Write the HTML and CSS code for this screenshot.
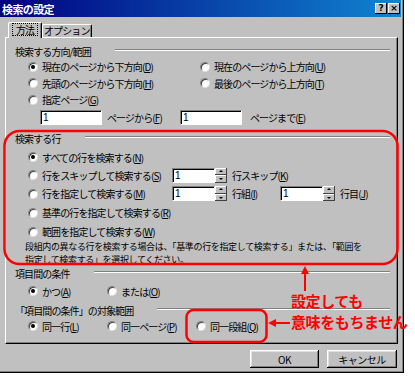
FILE: index.html
```html
<!DOCTYPE html>
<html lang="ja">
<head>
    <meta charset="UTF-8">
    <title>検索の設定</title>
    <link rel="stylesheet" href="styles.css">
</head>
<body>
<div class="dialog">
    <div class="titlebar">
        <span class="title">検索の設定</span>
        <div class="title-buttons">
            <span class="tbtn">?</span><span class="tbtn">×</span>
        </div>
    </div>

    <div class="tabs">
        <div class="tab active"><span class="focus">方法</span></div>
        <div class="tab">オプション</div>
    </div>

    <div class="panel">
        <div class="group-head"><span>検索する方向/範囲</span><i class="etch"></i></div>
        <div class="row h17">
            <label class="opt w172"><span class="radio on"></span>現在のページから下方向(<u>D</u>)</label>
            <label class="opt"><span class="radio"></span>現在のページから上方向(<u>U</u>)</label>
        </div>
        <div class="row h16">
            <label class="opt w172"><span class="radio"></span>先頭のページから下方向(<u>H</u>)</label>
            <label class="opt"><span class="radio"></span>最後のページから上方向(<u>T</u>)</label>
        </div>
        <div class="row h17">
            <label class="opt"><span class="radio"></span>指定ページ(<u>G</u>)</label>
        </div>
        <div class="row h19 pages">
            <span class="field wide">1</span>
            <span class="after-field w78">ページから(<u>F</u>)</span>
            <span class="field wide">1</span>
            <span class="after-field gap8">ページまで(<u>E</u>)</span>
        </div>

        <div class="group-head mt4"><span>検索する行</span><i class="etch"></i></div>
        <div class="row h18 mt3">
            <label class="opt"><span class="radio on"></span>すべての行を検索する(<u>N</u>)</label>
        </div>
        <div class="row h18">
            <label class="opt w144"><span class="radio"></span>行をスキップして検索する(<u>S</u>)</label>
            <span class="spinbox"><span class="field narrow">1</span><span class="spin"><i></i><i class="down"></i></span></span>
            <span class="after-field">行スキップ(<u>K</u>)</span>
        </div>
        <div class="row h19">
            <label class="opt w144"><span class="radio"></span>行を指定して検索する(<u>M</u>)</label>
            <span class="spinbox"><span class="field narrow">1</span><span class="spin"><i></i><i class="down"></i></span></span>
            <span class="after-field w53">行組(<u>I</u>)</span>
            <span class="spinbox"><span class="field narrow">1</span><span class="spin"><i></i><i class="down"></i></span></span>
            <span class="after-field">行目(<u>J</u>)</span>
        </div>
        <div class="row h19">
            <label class="opt"><span class="radio"></span>基準の行を指定して検索する(<u>R</u>)</label>
        </div>
        <div class="row h19">
            <label class="opt"><span class="radio"></span>範囲を指定して検索する(<u>W</u>)</label>
        </div>
        <p class="note">段組内の異なる行を検索する場合は、「基準の行を指定して検索する」または、「範囲を<br>指定して検索する」を選択してください。</p>

        <div class="group-head"><span>項目間の条件</span><i class="etch"></i></div>
        <div class="row h18 mt2">
            <label class="opt w79"><span class="radio on"></span>かつ(<u>A</u>)</label>
            <label class="opt"><span class="radio"></span>または(<u>O</u>)</label>
        </div>

        <div class="group-head mt3"><span>「項目間の条件」の対象範囲</span><i class="etch"></i></div>
        <div class="row h18">
            <label class="opt w79"><span class="radio on"></span>同一行(<u>L</u>)</label>
            <label class="opt w89"><span class="radio"></span>同一ページ(<u>P</u>)</label>
            <label class="opt"><span class="radio"></span>同一段組(<u>Q</u>)</label>
        </div>
    </div>

    <div class="buttons">
        <button class="btn ok">OK</button>
        <button class="btn cancel">キャンセル</button>
    </div>

    <!-- 赤い注記 -->
    <svg class="marks" width="404" height="373" viewBox="0 0 404 373">
        <rect x="4.5" y="131" width="393" height="133" rx="15" fill="none" stroke="#f00" stroke-width="2.5"/>
        <rect x="186.5" y="310" width="80" height="32" rx="7" fill="none" stroke="#f00" stroke-width="2.5"/>
        <line x1="305" y1="272" x2="305" y2="291" stroke="#f00" stroke-width="2"/>
        <polygon points="305,266 301,274 309,274" fill="#f00"/>
        <line x1="274" y1="323" x2="290" y2="323" stroke="#f00" stroke-width="2"/>
        <polygon points="268,323 276,319 276,327" fill="#f00"/>
    </svg>
    <div class="warn">設定しても<br>意味をもちません</div>
</div>
</body>
</html>
```

FILE: styles.css
```css
body {
    margin: 0;
    background-color: #fff;
    font-family: 'Noto Sans CJK JP', sans-serif;
    font-size: 10px;
    letter-spacing: -0.9px;
    color: #000;
}

.dialog {
    position: relative;
    width: 404px;
    height: 373px;
    box-sizing: border-box;
    background-color: #c0c0c0;
    border-right: 1px solid #000;
    border-bottom: 1px solid #000;
    box-shadow: inset -1px -1px #808080;
    padding-right: 2px;
}

.titlebar {
    height: 17px;
    display: flex;
    align-items: center;
    justify-content: space-between;
    padding: 0 1px 0 2px;
    background: linear-gradient(90deg, #000080, #1084d0);
}

.title {
    color: #fff;
    font-weight: bold;
    font-size: 11px;
    letter-spacing: -0.6px;
}

.title-buttons {
    display: flex;
    gap: 1px;
}

.tbtn {
    width: 12px;
    height: 11px;
    background-color: #c0c0c0;
    box-shadow: inset -1px -1px #000, inset 1px 1px #fff;
    font-family: 'DejaVu Sans', sans-serif;
    font-weight: bold;
    font-size: 9px;
    letter-spacing: 0;
    line-height: 11px;
    text-align: center;
}

.tabs {
    display: flex;
    align-items: flex-end;
    height: 15px;
    margin: 5px 0 0 8px;
}

.tab {
    height: 13px;
    width: 50px;
    box-sizing: border-box;
    padding: 0 1px;
    border-top: 1px solid #fff;
    border-left: 1px solid #fff;
    border-right: 1px solid #000;
    box-shadow: inset -1px 0 #808080;
    border-radius: 2px 2px 0 0;
    line-height: 11px;
    white-space: nowrap;
    overflow: hidden;
}

.tab.active {
    width: 34px;
    height: 16px;
    margin-bottom: -1px;
    position: relative;
    z-index: 1;
    background-color: #c0c0c0;
    padding: 1px 4px 0;
}

.focus {
    display: block;
    outline: 1px dotted #000;
    line-height: 11px;
    padding: 0 3px;
}

.panel {
    width: 393px;
    height: 307px;
    margin-left: 5px;
    box-sizing: border-box;
    padding-top: 6px;
    border: 1px solid;
    border-color: #fff #000 #000 #fff;
    box-shadow: inset -1px -1px #808080;
}

.group-head {
    height: 14px;
    display: flex;
    align-items: center;
    padding: 0 7px 0 9px;
    white-space: nowrap;
}

.etch {
    flex: 1;
    height: 0;
    margin: -3px 0 0 24px;
    border-top: 1px solid #808080;
    border-bottom: 1px solid #fff;
}

.row {
    display: flex;
    align-items: center;
    padding-left: 22px;
    white-space: nowrap;
}

.h16 { height: 16px; }
.h17 { height: 17px; }
.h18 { height: 18px; }
.h19 { height: 19px; }
.mt2 { margin-top: 2px; }
.mt3 { margin-top: 3px; }
.mt4 { margin-top: 4px; }

.opt {
    display: flex;
    align-items: center;
}

.w79 { width: 79px; }
.w89 { width: 89px; }
.w144 { width: 144px; }
.w172 { width: 172px; }

.radio {
    position: relative;
    flex: none;
    width: 10px;
    height: 10px;
    box-sizing: border-box;
    margin-right: 4px;
    border-radius: 50%;
    background-color: #fff;
    border: 1px solid;
    border-color: #808080 #dfdfdf #dfdfdf #808080;
    box-shadow: inset 1px 1px #404040;
}

.radio.on::after {
    content: "";
    position: absolute;
    left: 2px;
    top: 2px;
    width: 4px;
    height: 4px;
    border-radius: 50%;
    background-color: #000;
}

.pages {
    padding-left: 34px;
}

.field {
    width: 62px;
    height: 15px;
    box-sizing: border-box;
    padding-left: 2px;
    background-color: #fff;
    border: 1px solid;
    border-color: #808080 #fff #fff #808080;
    box-shadow: inset 1px 1px #000;
    line-height: 13px;
    font-family: 'Liberation Sans', sans-serif;
    font-size: 10px;
    letter-spacing: 0;
}

.field.narrow {
    width: 43px;
}

.after-field {
    margin-left: 5px;
}

.w78 { width: 73px; }
.w53 { width: 48px; }
.gap8 { margin-left: 8px; }

.spinbox {
    display: flex;
}

.spin {
    display: flex;
    flex-direction: column;
    width: 12px;
    height: 15px;
}

.spin i {
    position: relative;
    flex: 1;
    background-color: #c0c0c0;
    box-shadow: inset -1px -1px #404040, inset 1px 1px #fff;
}

.spin i::before {
    content: "";
    position: absolute;
    left: 4px;
    top: 2px;
    border-left: 2px solid transparent;
    border-right: 2px solid transparent;
    border-bottom: 2px solid #000;
}

.spin i.down::before {
    top: 3px;
    border-bottom: 0;
    border-top: 2px solid #000;
}

.note {
    margin: -1px 0 0;
    padding-left: 19px;
    font-size: 9px;
    line-height: 13px;
    letter-spacing: -0.35px;
    white-space: nowrap;
}

.buttons {
    display: flex;
    justify-content: flex-end;
    gap: 8px;
    margin-top: 6px;
    padding-right: 4px;
}

.btn {
    height: 18px;
    padding: 0;
    border: 0;
    background-color: #c0c0c0;
    box-shadow: inset -1px -1px #000, inset 1px 1px #fff, inset -2px -2px #808080, inset 2px 2px #dfdfdf;
    font-family: 'Noto Sans CJK JP', sans-serif;
    font-size: 10px;
    letter-spacing: -0.5px;
    color: #000;
}

.ok { width: 69px; }
.cancel { width: 70px; }

.marks {
    position: absolute;
    left: 0;
    top: 0;
    pointer-events: none;
}

.warn {
    position: absolute;
    left: 291px;
    top: 290px;
    color: #f00;
    font-size: 15px;
    font-weight: bold;
    line-height: 21px;
    letter-spacing: -0.4px;
    white-space: nowrap;
}
```
